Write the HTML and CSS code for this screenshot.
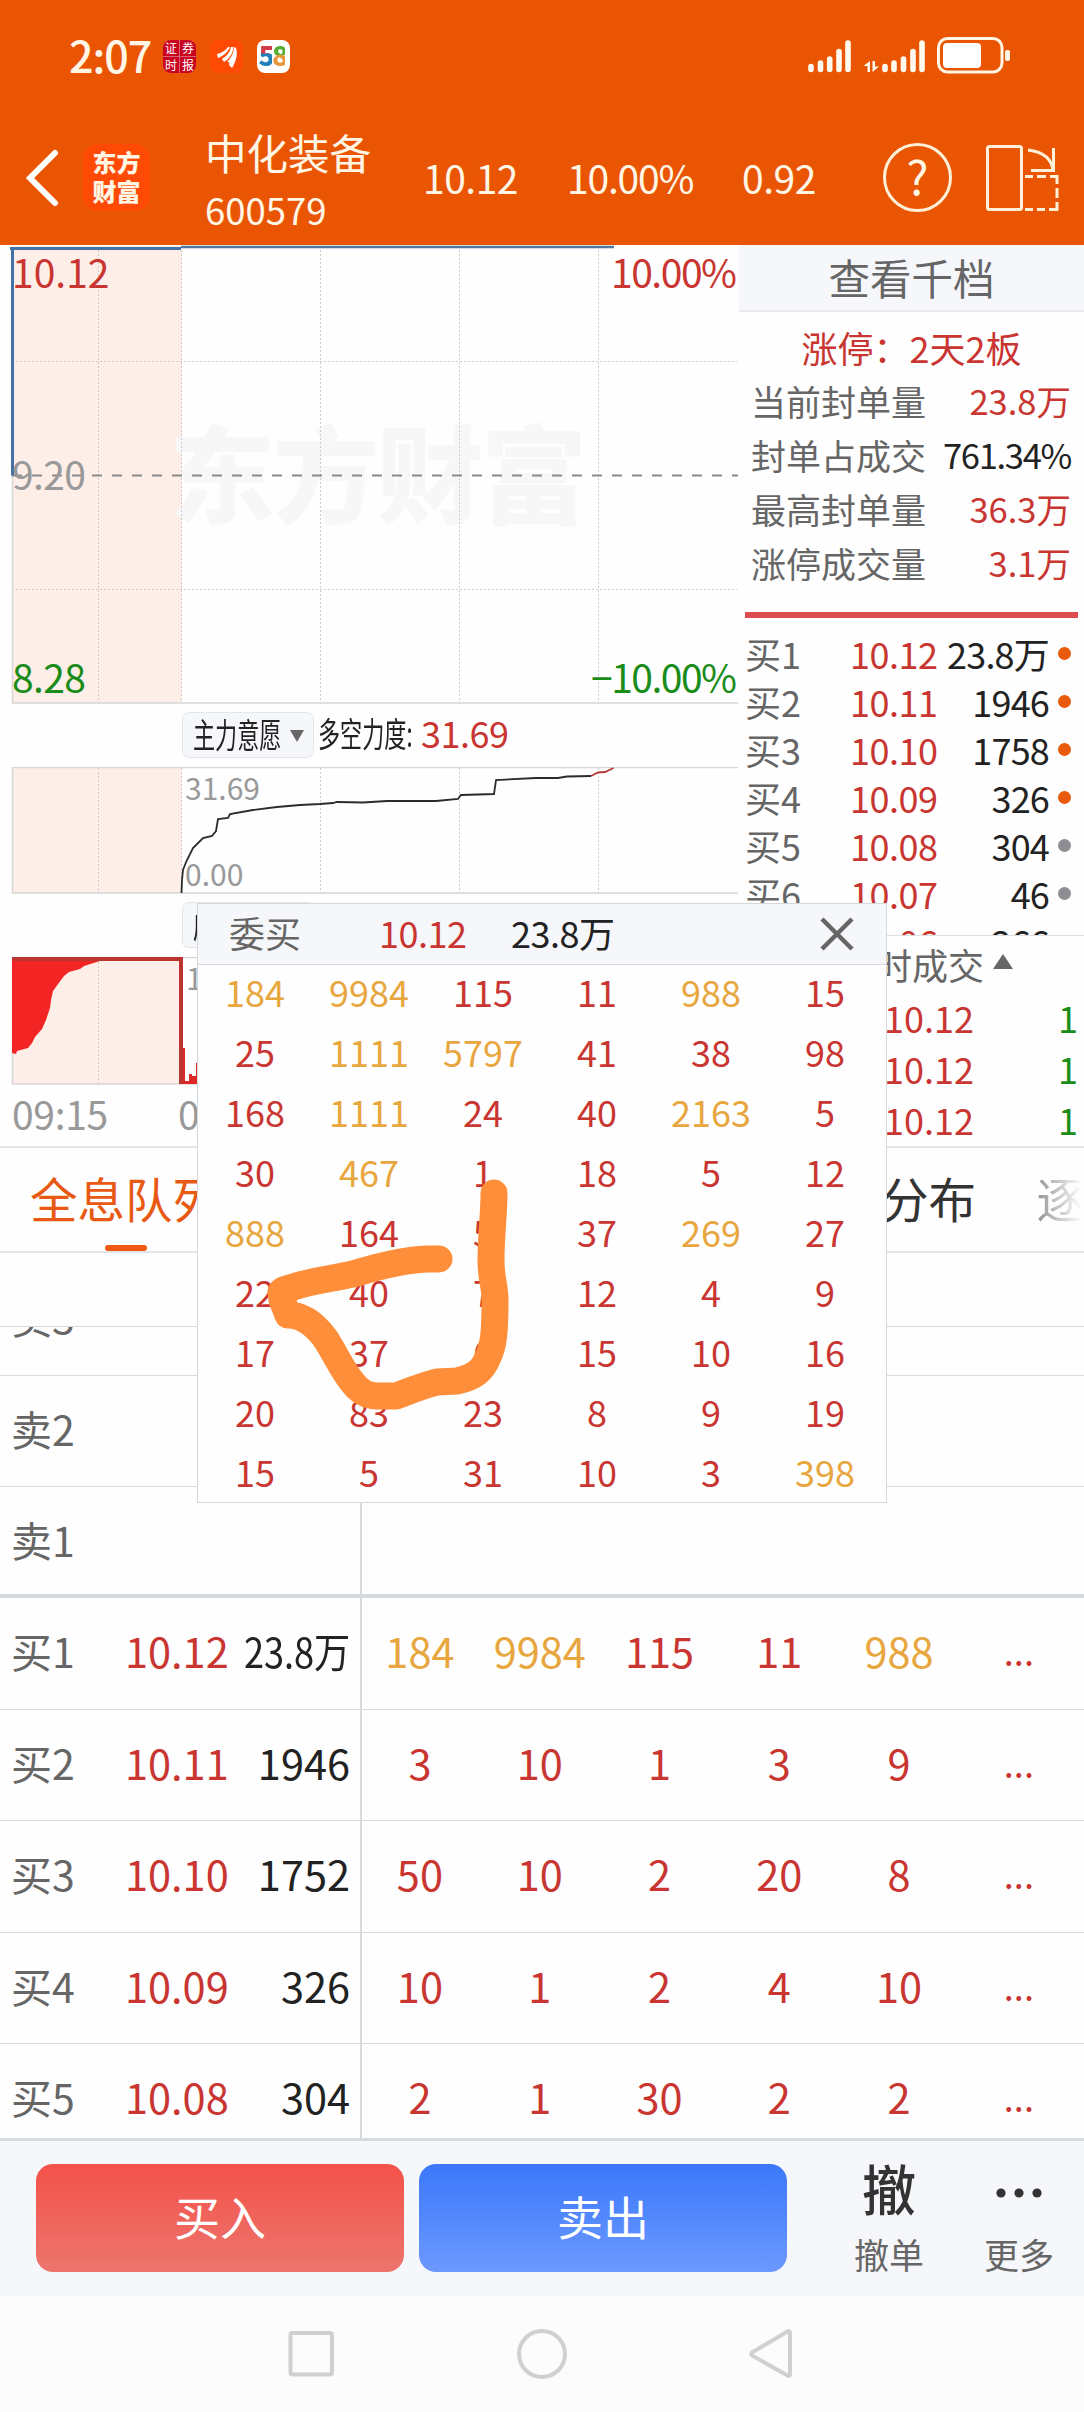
FILE: index.html
```html
<!DOCTYPE html>
<html lang="zh-CN">
<head>
  <meta charset="UTF-8" />
  <meta name="viewport" content="width=device-width, initial-scale=1.0"/>
  <title>中化装备 600579</title>
  <link rel="stylesheet" href="styles.css">
</head>
<body>

  <div class="header">
    <div class="status-bar">
      <div class="status-left">
        <span class="clock">2:07</span>
        <div class="app-icon app-news"><span>证</span><span>券</span><span>时</span><span>报</span></div>
        <svg class="app-icon" viewBox="0 0 33 33">
          <rect width="33" height="33" rx="8" fill="#ff4a05"/>
          <path d="M7 14C12 13 16 10 18 7L20 7C18 12 13 16 8 18Z" fill="#fff"/>
          <path d="M12 19C17 16 20 12 21 7L23.500 7C23 14 19 19 14 22Z" fill="#fff"/>
          <path d="M17 22C21 18 24 13 24 7L26 8C28 15 26 21 22 28L19 25C20 22 19 22 17 22Z" fill="#fff"/>
        </svg>
        <div class="app-icon app-58"><span class="five">5</span><span class="eight">8</span></div>
      </div>
      <svg class="status-right" width="204" height="40" viewBox="808 35 204 40">
        <g stroke="#fffaf0" stroke-width="5.600" stroke-linecap="round">
          <path d="M811 66.500V69.500M820.500 63V69.500M829.700 59V69.500M839 51.500V69.500M848 43V69.500"/>
          <path d="M885 66.500V69.500M894 63V69.500M903.500 59V69.500M913 51.500V69.500M922 43V69.500"/>
        </g>
        <path d="M870 61V72H867.500V66H863.500ZM872.500 72V61H875V66.500H879Z" fill="#fffaf0"/>
        <rect x="938.500" y="38.500" width="63.500" height="33.500" rx="9" fill="none" stroke="#fff6e6" stroke-width="3"/>
        <rect x="943" y="43" width="38" height="25" rx="4" fill="#fff"/>
        <rect x="1005" y="50" width="5" height="11" rx="2" fill="#fff6e6"/>
      </svg>
    </div>

    <div class="title-bar">
      <svg class="back" width="34" height="60" viewBox="0 0 34 60">
        <path d="M30 5L5 30L30 55" fill="none" stroke="#fff" stroke-width="6" stroke-linecap="round"/>
      </svg>
      <div class="brand">东方<br>财富</div>
      <div class="stock">
        <div class="stock-name">中化装备</div>
        <div class="stock-code">600579</div>
      </div>
      <span class="quote quote-price">10.12</span>
      <span class="quote quote-pct">10.00%</span>
      <span class="quote quote-diff">0.92</span>
      <div class="help">?</div>
      <svg class="rotate" width="74" height="70" viewBox="985 142 74 70" fill="none" stroke="#fff0d8" stroke-width="3">
        <rect x="987.500" y="145.500" width="34" height="63" rx="2"/>
        <path d="M1028 149C1044 151 1052 158 1053 170M1053.500 147V169M1031 169.500H1055"/>
        <path d="M1025 175.500H1033M1037 175.500H1046M1050 175.500H1057V183M1057 187V197M1057 201V208.500H1049M1045 208.500H1037M1033 208.500H1025"/>
      </svg>
    </div>
  </div>

  <div class="market">
    <div class="charts">
      <!-- price chart -->
      <svg width="738" height="459" viewBox="0 245 738 459">
        <rect x="12" y="246" width="170" height="457" fill="#fdeee8"/>
        <text class="watermark" x="169" y="515" textLength="418">东方财富</text>
        <path class="grid-line" d="M98.500 250V703M181.500 250V703M320.500 250V703M459.500 250V703M598.500 250V703M12 361.500H737M12 589.500H737"/>
        <path class="axis" d="M12.500 475V703M12 703H738"/>
        <path d="M12 475.500H738" stroke="#8a8a8a" stroke-width="2" stroke-dasharray="10 10"/>
        <path d="M181 247H614" stroke="#52789f" stroke-width="2.500"/>
        <path d="M10 248.500H181M12.500 247V475.500" stroke="#4472a6" stroke-width="3"/>
        <text class="axis-text red" x="12" y="288">10.12</text>
        <text class="axis-text gray" x="12" y="490" textLength="74">9.20</text>
        <text class="axis-text green" x="12" y="693" textLength="74">8.28</text>
        <text class="axis-text red" x="611" y="288" textLength="126">10.00%</text>
        <text class="axis-text green" x="591" y="693" textLength="146">−10.00%</text>
      </svg>

      <div class="indicator">
        <div class="indicator-btn"><span class="narrow">主力意愿</span><i class="tri-down"></i></div>
        <span class="narrow indicator-label">多空力度:</span>
        <span class="indicator-value">31.69</span>
      </div>

      <svg width="738" height="127" viewBox="0 767 738 127">
        <rect x="12" y="767" width="170" height="126" fill="#fdeee8"/>
        <path class="axis" d="M12.500 767V893M12 767.500H738M12 893H738"/>
        <path class="grid-line" d="M98.500 768V893M181.500 768V893M320.500 768V893M459.500 768V893M598.500 768V893"/>
        <text class="sub-text" x="185" y="800" textLength="75">31.69</text>
        <text class="sub-text" x="185" y="886">0.00</text>
        <path d="M181.500 893L182 880L183 870L186.500 861L193 848L203 838L212 836L216 831L218 819L228 818L230 814L253 810L277 807L300 805L320 804L333 803L337 802L363 802.500L387 801L436 801L458 799L461 795L494 794L496 780L536 778L558 778L567 776.500L591 776" fill="none" stroke="#2b2b2b" stroke-width="1.800"/>
        <path d="M591 776L598 772.500L605 772L613.500 768" fill="none" stroke="#b83a3a" stroke-width="1.800"/>
      </svg>

      <div class="indicator">
        <div class="indicator-btn"><span class="narrow">成交量</span><i class="tri-down"></i></div>
      </div>

      <!-- volume chart -->
      <svg width="738" height="128" viewBox="0 957 738 128">
        <rect x="12" y="957" width="170" height="127" fill="#fdeee8"/>
        <path class="axis" d="M12.500 957V1084M12 957.500H738M12 1084H738"/>
        <path class="grid-line" d="M98.500 958V1084"/>
        <path d="M12 957H100V961L84 966L80 969L69 972L64 976L58 984L53 991L51 1000L50 1008L46 1020L42 1029L35 1037L32 1043L28 1048L17 1051L16 1054L12 1053Z" fill="#f32424"/>
        <path d="M12 959H181V1084" fill="none" stroke="#bb3430" stroke-width="4"/>
        <path d="M183 1084V1048H185V1081H189V1074H192V1076H196V1063H200V1084Z" fill="#dd2828"/>
        <text class="sub-text" x="186" y="990">17382</text>
      </svg>
      <div class="times"><span>09:15</span><span>09:30</span></div>
    </div>

    <div class="side">
      <div class="depth-title">查看千档</div>
      <div class="limit-title">涨停：2天2板</div>
      <div class="limit-row"><span>当前封单量</span><b class="red">23.8万</b></div>
      <div class="limit-row"><span>封单占成交</span><b class="tight">761.34%</b></div>
      <div class="limit-row"><span>最高封单量</span><b class="red">36.3万</b></div>
      <div class="limit-row"><span>涨停成交量</span><b class="red">3.1万</b></div>
      <div class="limit-bar"></div>
      <div class="bids" id="bids"></div>
      <div class="deals">
        <div class="deals-title">分时成交<i class="tri-up"></i></div>
        <div class="deal"><span class="red">10.12</span><span class="green">1</span></div>
        <div class="deal"><span class="red">10.12</span><span class="green">1</span></div>
        <div class="deal"><span class="red">10.12</span><span class="green">1</span></div>
      </div>
    </div>
  </div>

  <div class="tabs">
    <div class="tab active">全息队列</div>
    <div class="tab tab-dist">分布</div>
    <div class="tab tab-last">逐</div>
  </div>

  <div class="queue-gap"></div>
  <div class="queue" id="queue"></div>

  <div class="actions">
    <div class="btn btn-buy">买入</div>
    <div class="btn btn-sell">卖出</div>
    <div class="action"><div class="action-icon">撤</div><div>撤单</div></div>
    <div class="action action-more">
      <svg class="action-icon" width="46" height="54" viewBox="0 0 46 54" fill="#333">
        <circle cx="5" cy="25" r="4.600"/><circle cx="23" cy="25" r="4.600"/><circle cx="41" cy="25" r="4.600"/>
      </svg>
      <div>更多</div>
    </div>
  </div>

  <div class="nav">
    <svg width="1084" height="116" viewBox="0 2296 1084 116" fill="none" stroke="#d0d0d0" stroke-width="4">
      <rect x="290.500" y="2333" width="41.500" height="41.500" rx="2"/>
      <circle cx="542" cy="2354" r="23"/>
      <path d="M752 2352.500L787.500 2331.500Q790 2330 790 2333V2374Q790 2377 787.500 2375.500L752 2355.500Q750.500 2354 752 2352.500Z"/>
    </svg>
  </div>

  <!-- order queue popup -->
  <div class="popup">
    <div class="popup-header">
      <span class="popup-side">委买</span>
      <span class="popup-price red">10.12</span>
      <span class="popup-vol">23.8万</span>
      <svg class="close" width="34" height="34" viewBox="0 0 34 34">
        <path d="M2 2L32 32M32 2L2 32" stroke="#666" stroke-width="4.500"/>
      </svg>
    </div>
    <div class="popup-grid" id="popup-grid"></div>
  </div>

  <!-- hand drawn arrow -->
  <svg class="doodle" width="250" height="250" viewBox="262 1170 250 250">
    <path d="M439 1259L427 1259C405 1260 380 1266 360 1272S320 1279 300 1285S284 1289 281 1292L282 1300L288 1315C300 1315 313 1322 325 1338C335 1353 342 1370 353 1383C360 1392 368 1396 377 1396L396 1396C410 1391 418 1387 437 1382L457 1381C475 1377 483 1370 488 1357C494 1345 495 1330 495 1300C495 1285 491 1280 491 1260C491 1235 494 1215 494 1193" fill="none" stroke="#ff8e3a" stroke-width="27" stroke-linecap="round" stroke-linejoin="round"/>
  </svg>

  <script>
    const bids = [
      [1, '10.12', '23.8万', 'hot'],
      [2, '10.11', '1946', 'hot'],
      [3, '10.10', '1758', 'hot'],
      [4, '10.09', '326', 'hot'],
      [5, '10.08', '304', ''],
      [6, '10.07', '46', ''],
      [7, '10.06', '266', 'hot']
    ];

    const queue = [
      ['卖3'], ['卖2'], ['卖1'],
      ['买1', '10.12', '23.8万', 184, 9984, 115, 11, 988],
      ['买2', '10.11', '1946', 3, 10, 1, 3, 9],
      ['买3', '10.10', '1752', 50, 10, 2, 20, 8],
      ['买4', '10.09', '326', 10, 1, 2, 4, 10],
      ['买5', '10.08', '304', 2, 1, 30, 2, 2]
    ];

    const orders = [
      184, 9984, 115, 11, 988, 15,
      25, 1111, 5797, 41, 38, 98,
      168, 1111, 24, 40, 2163, 5,
      30, 467, 1, 18, 5, 12,
      888, 164, 5, 37, 269, 27,
      22, 40, 7, 12, 4, 9,
      17, 37, 6, 15, 10, 16,
      20, 83, 23, 8, 9, 19,
      15, 5, 31, 10, 3, 398
    ];

    // big orders are highlighted in yellow
    function cell(n) {
      return `<span class="${n >= 184 ? 'big' : 'red'}">${n}</span>`;
    }

    document.getElementById('bids').innerHTML = bids.map(b => `
      <div class="bid"><span>买${b[0]}</span><span class="red">${b[1]}</span><span class="vol">${b[2]}</span><i class="dot ${b[3]}"></i></div>`).join('');

    document.getElementById('queue').innerHTML = queue.map(q => `
      <div class="queue-row">
        <div class="queue-left">
          <span class="level">${q[0]}</span>
          <span class="price red">${q[1] || ''}</span>
          <span class="vol"><span class="${(q[2] || '').includes('万') ? 'squeeze' : ''}">${q[2] || ''}</span></span>
        </div>
        <div class="queue-cells">${q.slice(3).map(cell).join('')}${q[1] ? '<span class="red more">...</span>' : ''}</div>
      </div>`).join('');

    document.getElementById('popup-grid').innerHTML = orders.map(cell).join('');
  </script>

</body>
</html>
```
FILE: styles.css
```css
* {
  box-sizing: border-box;
}
body {
  position: relative;
  margin: 0;
  width: 1084px;
  height: 2412px;
  overflow: hidden;
  font-family: 'Noto Sans CJK SC', 'Noto Sans', sans-serif;
  font-size: 36px;
  background: #fefefe;
  color: #222;
}
svg {
  display: block;
  flex: none;
}
.red { color: #c93531; }
.green { color: #1a8c1a; }
.big { color: #e8a63e; }

/* header */
.header {
  height: 245px;
  background: #e95502;
  color: #fff6e6;
}
.status-bar {
  display: flex;
  justify-content: space-between;
  height: 110px;
  padding: 35px 72px 0 69px;
}
.status-left {
  display: flex;
  align-items: center;
  height: 43px;
}
.clock {
  width: 94px;
  font-size: 43px;
  font-weight: 500;
  line-height: 40px;
  letter-spacing: -1px;
  padding-bottom: 5px;
}
.app-icon {
  flex: none;
  width: 33px;
  height: 33px;
  margin-right: 14px;
}
.app-news {
  display: grid;
  grid-template-columns: 16px 16px;
  gap: 1px;
  background: #d9637a;
  border-radius: 8px;
  overflow: hidden;
}
.app-news span {
  background: #c8021f;
  color: #fff;
  font-size: 12px;
  line-height: 16px;
  text-align: center;
}
.app-58 {
  background: #fff;
  border-radius: 8px;
  font-size: 27px;
  font-weight: 900;
  line-height: 29px;
  text-align: center;
  letter-spacing: -3px;
  padding-right: 3px;
}
.five {
  background: linear-gradient(#d23b4b 45%, #2180b8 50%);
  -webkit-background-clip: text;
  color: transparent;
}
.eight {
  background: linear-gradient(#58ae31 50%, #e8963c 52%);
  -webkit-background-clip: text;
  color: transparent;
}
.title-bar {
  display: flex;
  align-items: center;
  height: 135px;
  padding-left: 25px;
}
.brand {
  width: 67px;
  height: 67px;
  margin-left: 24px;
  padding-top: 3px;
  border-radius: 15px;
  background: #ff4a05;
  font-size: 24px;
  font-weight: 900;
  line-height: 29px;
  text-align: center;
}
.stock {
  width: 218px;
  margin: 6px 0 0 55px;
}
.stock-name {
  font-size: 41.500px;
  line-height: 58px;
}
.stock-code {
  font-size: 36.500px;
  line-height: 58px;
}
.quote {
  font-size: 39px;
  line-height: 56px;
  margin-top: -2px;
  letter-spacing: -0.5px;
}
.quote-price { width: 144px; }
.quote-pct {
  width: 175px;
  letter-spacing: -1.2px;
}
.quote-diff { width: 141px; }
.help {
  flex: none;
  width: 69px;
  height: 69px;
  border: 3px solid #fff0d8;
  border-radius: 50%;
  font-size: 47px;
  line-height: 58px;
  text-align: center;
}
.rotate {
  margin-left: 33px;
}

/* charts */
.market {
  display: flex;
  height: 901px;
}
.charts {
  width: 739px;
}
.grid-line {
  fill: none;
  stroke: #ccc;
  stroke-dasharray: 2 2;
}
.axis {
  fill: none;
  stroke: #d6d6d6;
  stroke-width: 1.5;
}
.watermark {
  font-size: 106px;
  font-weight: 900;
  fill: #f7f7f7;
}
.axis-text {
  font-size: 39px;
  fill: currentColor;
}
.gray { color: #999; }
.sub-text {
  font-size: 30px;
  fill: #999;
}
.indicator {
  display: flex;
  height: 63px;
  padding: 8px 0 0 182px;
  line-height: 41px;
}
.indicator-btn {
  display: flex;
  flex: none;
  width: 132px;
  height: 46px;
  padding-left: 10px;
  border: 1px solid #e4e7ea;
  border-radius: 7px;
  background: #f6f7fa;
}
/* condensed label, the box keeps the scaled width */
.narrow {
  width: 97px;
  font-size: 34px;
  white-space: nowrap;
  transform: scaleX(0.65);
  transform-origin: left;
}
.indicator-label {
  width: 103px;
  margin-left: 4px;
}
.indicator-value {
  color: #c93531;
  letter-spacing: -0.5px;
}
.tri-down {
  flex: none;
  margin-top: 17px;
  border: 7.5px solid transparent;
  border-top: 12px solid #666;
  border-bottom: 0;
  height: 12px;
}
.tri-up {
  display: inline-block;
  margin: 0 0 5px 9px;
  border: 10.5px solid transparent;
  border-bottom: 15px solid #666;
  border-top: 0;
}
.times {
  display: flex;
  gap: 70px;
  padding-left: 12px;
  font-size: 39px;
  line-height: 56px;
  letter-spacing: -0.3px;
  color: #999;
}

/* side panel */
.side {
  width: 345px;
}
.depth-title {
  height: 67px;
  border-bottom: 2px solid #e9e9eb;
  background: #f6f7fa;
  font-size: 41.500px;
  line-height: 64px;
  text-align: center;
  color: #666;
}
.limit-title {
  height: 61px;
  font-size: 36px;
  line-height: 71px;
  text-align: center;
  color: #c93531;
}
.limit-row {
  display: flex;
  justify-content: space-between;
  height: 54px;
  padding: 0 13px 0 12px;
  font-size: 35px;
  line-height: 55px;
  color: #666;
}
.limit-row b {
  font-weight: 400;
  font-size: 34.500px;
}
.limit-row .tight {
  color: #222;
  letter-spacing: -1.3px;
}
.limit-bar {
  height: 6px;
  margin: 23px 6px 11px;
  background: #dc4c50;
}
.bids {
  height: 307px;
  overflow: hidden;
  border-bottom: 1px solid #dcdfe2;
}
.bid {
  display: flex;
  align-items: center;
  height: 48px;
  padding-left: 6px;
  line-height: 48px;
  color: #666;
}
.bid span:first-child {
  width: 105px;
}
.bid .red {
  width: 92px;
  letter-spacing: -0.5px;
}
.bid .vol {
  width: 107px;
  text-align: right;
  color: #222;
  white-space: nowrap;
  letter-spacing: -0.8px;
}
.dot {
  width: 13px;
  height: 13px;
  margin: 0 0 0 9px;
  border-radius: 50%;
  background: #8d8d93;
}
.dot.hot { background: #e85a0c; }
.deals-title {
  display: flex;
  align-items: center;
  height: 56px;
  padding-left: 101px;
  line-height: 51px;
  color: #666;
}
.deal {
  display: flex;
  justify-content: space-between;
  padding: 0 6px 0 145px;
  line-height: 51px;
}

/* tabs */
.tabs {
  display: flex;
  height: 107px;
  border-top: 2px solid #e3e5e8;
  border-bottom: 2px solid #e3e5e8;
  font-size: 47.500px;
  line-height: 99px;
  color: #333;
}
.tab.active {
  position: relative;
  width: 852px;
  padding-left: 30px;
  color: #e85a14;
}
.tab.active::after {
  content: '';
  position: absolute;
  left: 105px;
  bottom: 0;
  width: 42px;
  height: 6px;
  border-radius: 3px;
  background: #ee5a14;
}
.tab-dist {
  width: 155px;
  padding-left: 32px;
}
.tab-last {
  padding-left: 33px;
  background: linear-gradient(to right, #999 35px, #fefefe 78px);
  -webkit-background-clip: text;
  color: transparent;
}

/* order queue */
.queue-gap {
  height: 74px;
  border-bottom: 1px solid #d6dadd;
}
.queue {
  display: flex;
  flex-direction: column;
  justify-content: flex-end;
  height: 812px;
  overflow: hidden;
}
.queue-row {
  display: flex;
  flex: none;
  height: 111.400px;
  font-size: 41.500px;
  line-height: 104px;
  border-bottom: 1.500px solid #d9dcdf;
}
.queue-row:nth-child(3) {
  border-bottom: 4px solid #d6dadd;
}
.queue-row:last-child {
  height: 95px;
}
.queue-left {
  display: flex;
  flex: none;
  width: 362px;
  padding-left: 11px;
  border-right: 2px solid #d6dadd;
}
.level {
  width: 114px;
  font-size: 41px;
  color: #666;
}
.price {
  width: 110px;
}
.queue-left .vol {
  display: flex;
  justify-content: flex-end;
  width: 115px;
  white-space: nowrap;
}
.squeeze {
  transform: scaleX(0.87);
  transform-origin: right;
}
.queue-cells {
  display: grid;
  grid-template-columns: repeat(6, 119.800px);
  margin-left: -2px;
  text-align: center;
}
.more {
  font-size: 36px;
}

/* bottom actions */
.actions {
  display: flex;
  height: 157px;
  padding: 23px 0 0 36px;
  border-top: 2px solid #d6dadd;
  background: #f6f7fa;
}
.btn {
  width: 368px;
  height: 108px;
  margin-right: 15px;
  border-radius: 17px;
  font-size: 46px;
  line-height: 103px;
  text-align: center;
  color: #fff;
}
.btn-buy {
  background: linear-gradient(#f4524a, #ec756d);
}
.btn-sell {
  background: linear-gradient(#3b78fa, #6c99ff);
}
.action {
  width: 130px;
  margin-left: 22px;
  margin-top: -3px;
  font-size: 35px;
  line-height: 50px;
  text-align: center;
  color: #666;
}
.action-icon {
  height: 68px;
  margin: 0 auto;
  font-size: 54px;
  font-weight: 500;
  line-height: 54px;
  color: #333;
}
.action-more {
  margin-left: 0;
}
.nav {
  background: #fcfcfc;
}

/* popup */
.popup {
  position: absolute;
  left: 197px;
  top: 903px;
  width: 690px;
  height: 600px;
  border: 1.500px solid #d4d8dc;
  background: #fefefe;
  overflow: hidden;
}
.popup-header {
  display: flex;
  align-items: center;
  height: 61px;
  padding-left: 31px;
  border-bottom: 1.500px solid #d4d8dc;
  background: #f6f7fa;
  line-height: 54px;
}
.popup-header span {
  margin-top: -4px;
}
.popup-side {
  width: 150px;
  color: #666;
}
.popup-price {
  width: 132px;
  letter-spacing: -0.5px;
}
.popup-vol {
  width: 309px;
  letter-spacing: -0.5px;
}
.popup-grid {
  display: grid;
  grid-template-columns: repeat(6, 114px);
  grid-auto-rows: 60px;
  line-height: 53px;
  text-align: center;
}
.doodle {
  position: absolute;
  left: 262px;
  top: 1170px;
}
```
